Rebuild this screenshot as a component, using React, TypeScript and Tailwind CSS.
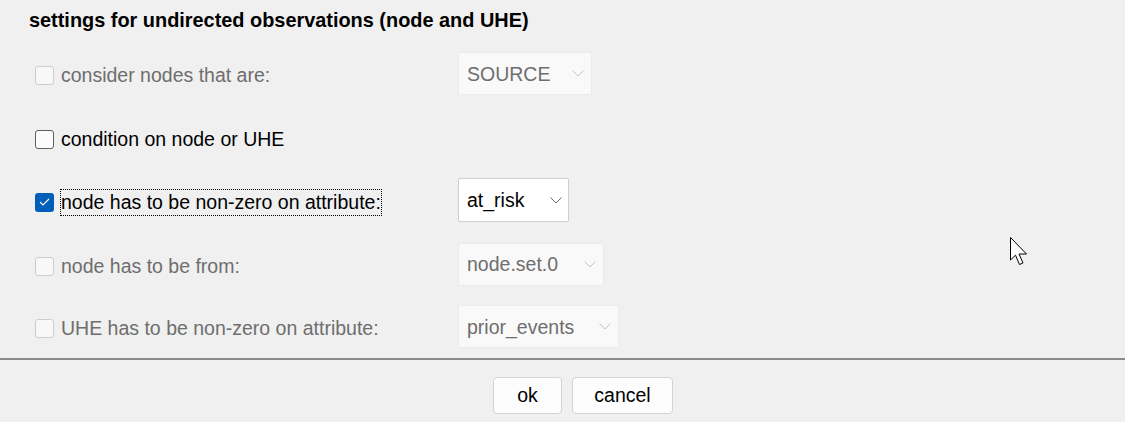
import React from "react";

function Chevron({ color }: { color: string }) {
  return (
    <svg width="12" height="7" viewBox="0 0 12 7" fill="none">
      <path d="M0.5 0.5 L6 6 L11.5 0.5" stroke={color} strokeWidth="1" />
    </svg>
  );
}

function Checkbox({ state }: { state: "disabled" | "off" | "on" }) {
  if (state === "on") {
    return (
      <div className="w-[19px] h-[19px] rounded-[3px] bg-[#005fb8] flex items-center justify-center shrink-0">
        <svg width="11" height="8" viewBox="0 0 11 8" fill="none">
          <path d="M1 4 L4 7 L10 1" stroke="#ffffff" strokeWidth="1.1" />
        </svg>
      </div>
    );
  }
  if (state === "off") {
    return <div className="w-[19px] h-[19px] rounded-[3px] border border-[#5f5f5f] bg-[#fbfbfb] shrink-0" />;
  }
  return <div className="w-[19px] h-[19px] rounded-[3px] border border-[#cdcdcd] bg-[#f8f8f8] shrink-0" />;
}

function Select({
  text,
  width,
  enabled,
}: {
  text: string;
  width: string;
  enabled?: boolean;
}) {
  return (
    <div
      className={
        enabled
          ? `flex items-center justify-between h-[44px] ${width} pl-[8px] pr-[6px] mb-[4px] rounded-[2px] border border-[#cfcfcf] bg-white text-black`
          : `flex items-center justify-between h-[43px] ${width} pl-[8px] pr-[7px] mb-[4px] rounded-[2px] border border-[#ebebeb] bg-[#f9f9f9] text-[#6e6e6e]`
      }
    >
      <span className="text-[19.5px] leading-[24px]">{text}</span>
      <Chevron color={enabled ? "#6b6b6b" : "#c4c4c4"} />
    </div>
  );
}

function Row({
  h,
  box,
  label,
  focused,
  children,
}: {
  h: string;
  box: "disabled" | "off" | "on";
  label: string;
  focused?: boolean;
  children?: React.ReactNode;
}) {
  return (
    <div className={`flex items-center ${h}`}>
      <div className="w-[423px] flex items-center">
        <Checkbox state={box} />
        <span
          className={`ml-[6px] text-[19.5px] leading-[25px] border ${
            focused ? "border-dotted border-black" : "border-transparent"
          } ${box === "disabled" ? "text-[#6e6e6e]" : "text-black"}`}
        >
          {label}
        </span>
      </div>
      {children}
    </div>
  );
}

export default function App() {
  return (
    <div
      className="relative w-[1125px] h-[422px] bg-[#f0f0f0] overflow-hidden"
      style={{ fontFamily: '"Liberation Sans", Arial, sans-serif' }}
    >
      <div className="h-[358px] pt-[9px] pl-[29px]">
        <div className="text-[19.9px] font-bold leading-[22px] text-black">
          settings for undirected observations (node and UHE)
        </div>
        <div className="mt-[13px] pl-[6px]">
          <Row h="h-[63px]" box="disabled" label="consider nodes that are:">
            <Select text="SOURCE" width="w-[134px]" />
          </Row>
          <Row h="h-[64px]" box="off" label="condition on node or UHE" />
          <Row h="h-[62px]" box="on" label="node has to be non-zero on attribute:" focused>
            <Select text="at_risk" width="w-[111px]" enabled />
          </Row>
          <Row h="h-[66px]" box="disabled" label="node has to be from:">
            <Select text="node.set.0" width="w-[146px]" />
          </Row>
          <Row h="h-[59px]" box="disabled" label="UHE has to be non-zero on attribute:">
            <Select text="prior_events" width="w-[161px]" />
          </Row>
        </div>
      </div>
      <div className="h-[2px] bg-[#8a8b8f]" />
      <div className="flex gap-[10px] pl-[493px] pt-[17px]">
        <button className="w-[69px] h-[37px] rounded-[4px] border border-[#d3d3d3] bg-[#fdfdfd] text-[19.5px] text-black">
          ok
        </button>
        <button className="w-[101px] h-[37px] rounded-[4px] border border-[#d3d3d3] bg-[#fdfdfd] text-[19.5px] text-black">
          cancel
        </button>
      </div>
      <svg
        className="absolute left-[1010px] top-[237px]"
        width="20"
        height="30"
        viewBox="0 0 20 30"
      >
        <path
          d="M0.5 0.5 L0.5 23 L5.5 18.2 L9.5 27.5 L13 26 L9 17 L16.5 17 Z"
          fill="#ffffff"
          stroke="#000000"
          strokeWidth="1"
          strokeLinejoin="miter"
        />
      </svg>
    </div>
  );
}
